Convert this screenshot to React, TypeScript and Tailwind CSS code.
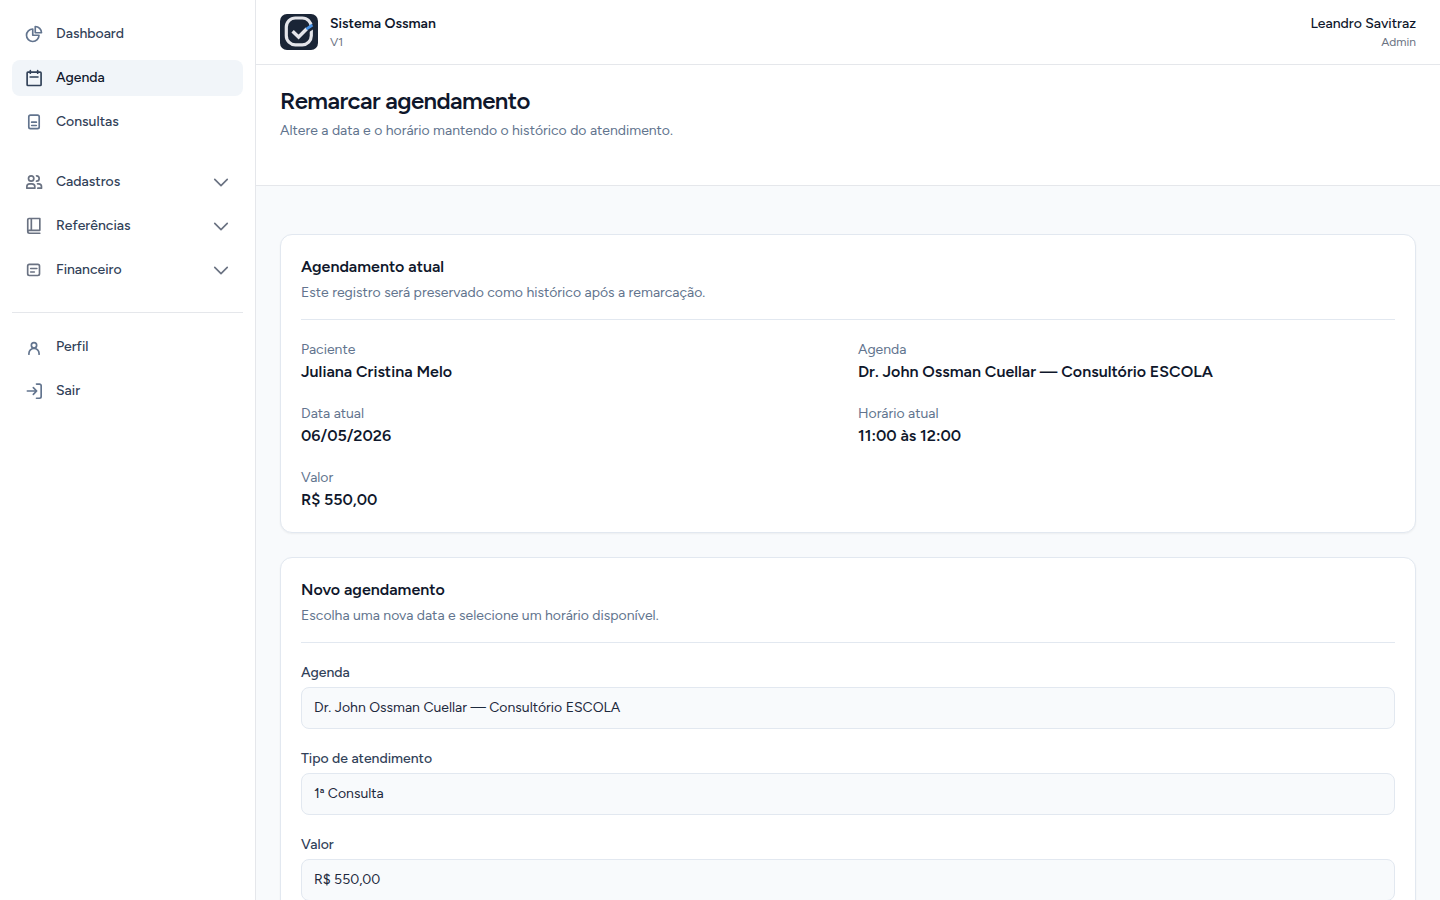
import type { ReactNode } from 'react';

interface NavItem {
  label: string;
  icon: ReactNode;
  active?: boolean;
  expandable?: boolean;
}

interface Detail {
  label: string;
  value: string;
}

const mainNav: NavItem[] = [
  {
    label: 'Dashboard',
    icon: (
      <>
        <path d="M10.5 6a7.5 7.5 0 1 0 7.5 7.5h-7.5V6Z" />
        <path d="M13.5 10.5H21A7.5 7.5 0 0 0 13.5 3v7.5Z" />
      </>
    )
  },
  {
    label: 'Agenda',
    active: true,
    icon: (
      <>
        <rect x="3.75" y="5" width="16.75" height="16" rx="1" />
        <path d="M7.6 3.2v3M16.4 3.2v3M7.4 10.8h9.4" />
      </>
    )
  },
  {
    label: 'Consultas',
    icon: (
      <>
        <rect x="5.75" y="3.75" width="12.5" height="16.25" rx="2" />
        <path d="M9.2 12.2h5.6M9.2 16.2h5.6" />
      </>
    )
  }
];

const groupNav: NavItem[] = [
  {
    label: 'Cadastros',
    expandable: true,
    icon: (
      <>
        <circle cx="8.6" cy="7.8" r="3.2" />
        <path d="M3.4 19.4v-1.7a3.5 3.5 0 0 1 3.5-3.5h2.6a3.5 3.5 0 0 1 3.5 3.5v1.7H3.4Z" />
        <path d="M15 4.6a3.2 3.2 0 1 1 0 6.4M16.2 14.2h1.3a3.5 3.5 0 0 1 3.5 3.5v1.7h-4.4" />
      </>
    )
  },
  {
    label: 'Referências',
    expandable: true,
    icon: (
      <path d="M19 17.2V3H6a1.5 1.5 0 0 0-1.5 1.5v14.2a2 2 0 0 0 2 2H19M19 17.2H6.2a1.7 1.7 0 0 0-1.7 1.5M8.8 3v14.2" />
    )
  },
  {
    label: 'Financeiro',
    expandable: true,
    icon: (
      <>
        <rect x="4.4" y="5.2" width="14.2" height="13.4" rx="2" />
        <path d="M8 10.2h7.4M8 14.4h4.4" />
      </>
    )
  }
];

const accountNav: NavItem[] = [
  {
    label: 'Perfil',
    icon: (
      <>
        <circle cx="12" cy="10" r="3.2" />
        <path d="M5.9 20.6v-.9a6.1 6.1 0 0 1 12.2 0v.9" />
      </>
    )
  },
  {
    label: 'Sair',
    icon: (
      <>
        <path d="M15 3.7h3.6a2 2 0 0 1 2 2v13a2 2 0 0 1-2 2H15" />
        <path d="M4 12h11.2M11.2 8l4 4-4 4" />
      </>
    )
  }
];

const currentDetails: Detail[] = [
  { label: 'Paciente', value: 'Juliana Cristina Melo' },
  { label: 'Agenda', value: 'Dr. John Ossman Cuellar — Consultório ESCOLA' },
  { label: 'Data atual', value: '06/05/2026' },
  { label: 'Horário atual', value: '11:00 às 12:00' },
  { label: 'Valor', value: 'R$ 550,00' }
];

const formFields = [
  { id: 'agenda', label: 'Agenda', value: 'Dr. John Ossman Cuellar — Consultório ESCOLA' },
  { id: 'tipo', label: 'Tipo de atendimento', value: '1ª Consulta' },
  { id: 'valor', label: 'Valor', value: 'R$ 550,00' }
];

function iconColor(item: NavItem) {
  if (item.active) return 'text-slate-700';
  return item.expandable ? 'text-gray-500' : 'text-slate-500';
}

function NavEntry({ item }: { item: NavItem }) {
  const className = `w-full flex items-center gap-3 rounded-lg px-3 py-2 text-sm font-medium text-left ${
    item.active ? 'bg-slate-100 text-slate-900' : 'text-slate-700 hover:bg-slate-50'
  }`;

  const content = (
    <>
      <svg
        className={`w-5 h-5 shrink-0 ${iconColor(item)}`}
        fill="none"
        viewBox="0 0 24 24"
        stroke="currentColor"
        strokeWidth={2}
        strokeLinecap="round"
        strokeLinejoin="round"
      >
        {item.icon}
      </svg>
      <span className="flex-1">{item.label}</span>
      {item.expandable && (
        <svg
          className="w-5 h-5 text-gray-500"
          fill="none"
          viewBox="0 0 24 24"
          stroke="currentColor"
          strokeWidth={2}
          strokeLinecap="round"
          strokeLinejoin="round"
        >
          <path d="m4.5 8.75 7.5 7.5 7.5-7.5" />
        </svg>
      )}
    </>
  );

  if (item.expandable) {
    return (
      <button type="button" className={className}>
        {content}
      </button>
    );
  }

  return (
    <a href="#" className={className}>
      {content}
    </a>
  );
}

function Logo() {
  return (
    <svg className="w-[38px] h-9" viewBox="0 0 38 36" fill="none">
      <rect width="38" height="36" rx="7" fill="#1a2536" />
      <rect x="6.3" y="4" width="25" height="26.8" rx="9" stroke="#e4e5ea" strokeWidth="3.2" />
      {/* Gap in the ring where the tick crosses it */}
      <path d="m27 16.5 7-4.5" stroke="#1a2536" strokeWidth="5" />
      <path d="m12.6 17.2 6 5.8 8.2-8.2" stroke="#e4e5ea" strokeWidth="3.4" />
      <path d="m26.4 15.2 6-4.2" stroke="#4a94e6" strokeWidth="2.8" />
    </svg>
  );
}

function Card({ title, description, children }: { title: string; description: string; children: ReactNode }) {
  return (
    <section className="rounded-xl border border-slate-200 bg-white p-5 shadow-xs">
      <div className="border-b border-slate-200 pb-4">
        <h2 className="text-base font-semibold text-slate-900">{title}</h2>
        <p className="mt-1 text-sm text-slate-500">{description}</p>
      </div>
      {children}
    </section>
  );
}

export default function App() {
  return (
    <div className="flex h-screen bg-slate-50 font-['Figtree','Inter',sans-serif] text-slate-900 antialiased">
      <aside className="w-64 shrink-0 border-r border-gray-200 bg-white px-3 py-4">
        <nav>
          <div className="space-y-2">
            {mainNav.map(item => (
              <NavEntry key={item.label} item={item} />
            ))}
          </div>
          <div className="mt-6 space-y-2">
            {groupNav.map(item => (
              <NavEntry key={item.label} item={item} />
            ))}
          </div>
          <div className="mt-6 space-y-2 border-t border-gray-200 pt-4">
            {accountNav.map(item => (
              <NavEntry key={item.label} item={item} />
            ))}
          </div>
        </nav>
      </aside>

      <div className="flex min-w-0 flex-1 flex-col">
        <header className="flex shrink-0 items-center justify-between border-b border-gray-200 bg-white px-6 py-[14px]">
          <div className="flex items-center gap-3">
            <Logo />
            <div>
              <p className="text-sm font-semibold">Sistema Ossman</p>
              <p className="text-xs text-gray-500">V1</p>
            </div>
          </div>
          <div className="text-right">
            <p className="text-sm font-medium">Leandro Savitraz</p>
            <p className="text-xs text-gray-500">Admin</p>
          </div>
        </header>

        <div className="flex-1 overflow-y-auto [scrollbar-width:none]">
          {/* Page title */}
          <div className="border-b border-gray-200 bg-white px-6 pt-5 pb-11">
            <h1 className="text-2xl font-semibold tracking-tight">Remarcar agendamento</h1>
            <p className="mt-1 text-sm text-slate-500">
              Altere a data e o horário mantendo o histórico do atendimento.
            </p>
          </div>

          <main className="space-y-6 px-6 py-12">
            <Card title="Agendamento atual" description="Este registro será preservado como histórico após a remarcação.">
              <dl className="mt-5 grid grid-cols-2 gap-5">
                {currentDetails.map(detail => (
                  <div key={detail.label}>
                    <dt className="text-sm text-slate-500">{detail.label}</dt>
                    <dd className="text-base font-semibold">{detail.value}</dd>
                  </div>
                ))}
              </dl>
            </Card>

            <Card title="Novo agendamento" description="Escolha uma nova data e selecione um horário disponível.">
              <form className="mt-5 space-y-5">
                {formFields.map(field => (
                  <div key={field.id}>
                    <label htmlFor={field.id} className="block text-sm font-medium text-slate-700">
                      {field.label}
                    </label>
                    <input
                      id={field.id}
                      type="text"
                      readOnly
                      defaultValue={field.value}
                      className="mt-1 block w-full rounded-lg border border-slate-200 bg-slate-50 px-3 py-[10px] text-sm text-slate-800"
                    />
                  </div>
                ))}
              </form>
            </Card>
          </main>
        </div>
      </div>
    </div>
  );
}
